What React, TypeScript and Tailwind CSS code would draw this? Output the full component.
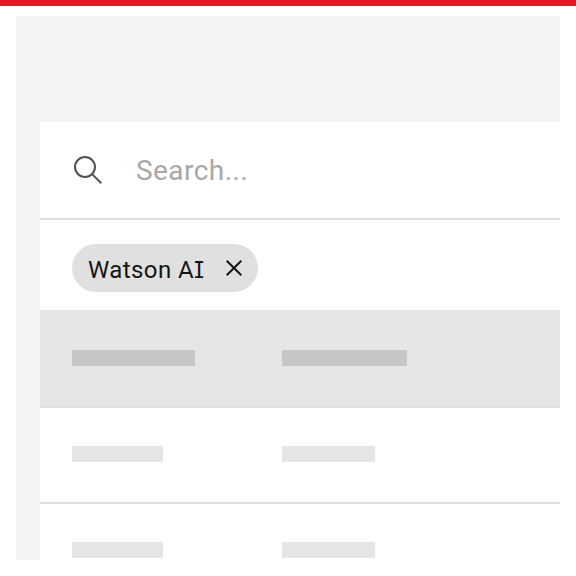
function SkeletonRow({ header = false, last = false }: { header?: boolean; last?: boolean }) {
  const bar = header ? 'bg-[#c6c6c6]' : 'bg-[#e5e5e5]';
  return (
    <div
      className={`flex shrink-0 pl-8 ${last ? 'h-14 pt-[38px]' : 'border-b-2 border-[#e0e0e0]'} ${
        header ? 'h-[98px] bg-[#e6e6e6] pt-10' : last ? '' : 'h-24 pt-[38px]'
      }`}
    >
      <div className="w-[210px]">
        <div className={`h-4 ${bar} ${header ? 'w-[123px]' : 'w-[90.7px]'}`} />
      </div>
      <div className={`h-4 ${bar} ${header ? 'w-[124.7px]' : 'w-[92.5px]'}`} />
    </div>
  );
}

export default function App() {
  return (
    <div className="flex h-[576px] w-[576px] flex-col overflow-hidden bg-white font-['Roboto',sans-serif]">
      <div className="h-1.5 shrink-0 bg-[#da1e28]" />
      <div className="mx-4 mt-2.5 h-[544px] bg-[#f3f3f3] pt-[106px] pl-6">
        <div className="flex h-[438px] flex-col overflow-hidden bg-white">
          <div className="flex h-[98px] shrink-0 items-center border-b-2 border-[#e0e0e0] pl-8">
            <svg className="h-8 w-8 shrink-0" viewBox="0 0 32 32" fill="none" stroke="#525252" strokeWidth="2">
              <circle cx="13" cy="13" r="10" />
              <path d="M20.1 20.1L29.3 29.3" />
            </svg>
            <span className="ml-8 pt-0.5 text-[28px] leading-8 tracking-[0.45px] text-[#a8a8a8]">Search...</span>
          </div>
          <div className="h-[90px] shrink-0 pt-6 pl-8">
            <div className="flex h-12 w-[186px] items-center rounded-full bg-[#e0e0e0] pl-4">
              <span className="w-[130px] pt-1 text-2xl leading-8 tracking-[0.4px] whitespace-nowrap text-[#161616]">
                Watson A
                <span className="font-['Inter',sans-serif] text-[23px] [font-feature-settings:'cv08']">I</span>
              </span>
              <svg className="h-8 w-8 shrink-0" viewBox="0 0 32 32" fill="none" stroke="#161616" strokeWidth="2">
                <path d="M8.7 8.7L23.3 23.3M23.3 8.7L8.7 23.3" />
              </svg>
            </div>
          </div>
          <SkeletonRow header />
          <SkeletonRow />
          <SkeletonRow last />
        </div>
      </div>
    </div>
  );
}
